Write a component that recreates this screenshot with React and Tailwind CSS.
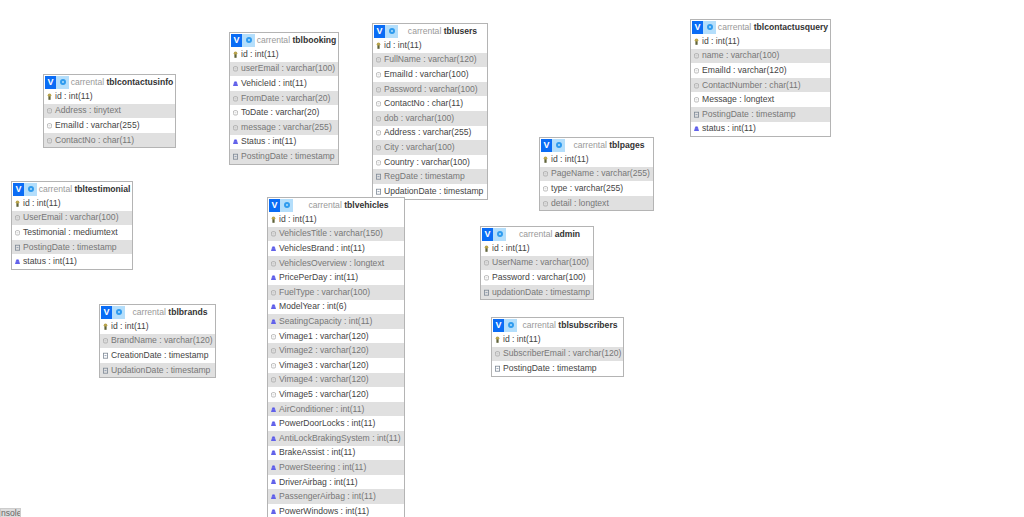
const tables = [
  { db: "carrental", name: "tblcontactusinfo", x: 43, y: 74, w: 133, rows: [["key", "id : int(11)"], ["text", "Address : tinytext"], ["text", "EmailId : varchar(255)"], ["text", "ContactNo : char(11)"]] },
  { db: "carrental", name: "tblbooking", x: 229, y: 32, w: 110, rows: [["key", "id : int(11)"], ["text", "userEmail : varchar(100)"], ["int", "VehicleId : int(11)"], ["text", "FromDate : varchar(20)"], ["text", "ToDate : varchar(20)"], ["text", "message : varchar(255)"], ["int", "Status : int(11)"], ["date", "PostingDate : timestamp"]] },
  { db: "carrental", name: "tblusers", x: 372, y: 23, w: 116, rows: [["key", "id : int(11)"], ["text", "FullName : varchar(120)"], ["text", "EmailId : varchar(100)"], ["text", "Password : varchar(100)"], ["text", "ContactNo : char(11)"], ["text", "dob : varchar(100)"], ["text", "Address : varchar(255)"], ["text", "City : varchar(100)"], ["text", "Country : varchar(100)"], ["date", "RegDate : timestamp"], ["date", "UpdationDate : timestamp"]] },
  { db: "carrental", name: "tblcontactusquery", x: 690, y: 19, w: 141, rows: [["key", "id : int(11)"], ["text", "name : varchar(100)"], ["text", "EmailId : varchar(120)"], ["text", "ContactNumber : char(11)"], ["text", "Message : longtext"], ["date", "PostingDate : timestamp"], ["int", "status : int(11)"]] },
  { db: "carrental", name: "tblpages", x: 539, y: 137, w: 115, rows: [["key", "id : int(11)"], ["text", "PageName : varchar(255)"], ["text", "type : varchar(255)"], ["text", "detail : longtext"]] },
  { db: "carrental", name: "tbltestimonial", x: 11, y: 181, w: 122, rows: [["key", "id : int(11)"], ["text", "UserEmail : varchar(100)"], ["text", "Testimonial : mediumtext"], ["date", "PostingDate : timestamp"], ["int", "status : int(11)"]] },
  { db: "carrental", name: "tblvehicles", x: 267, y: 197, w: 138, rows: [["key", "id : int(11)"], ["text", "VehiclesTitle : varchar(150)"], ["int", "VehiclesBrand : int(11)"], ["text", "VehiclesOverview : longtext"], ["int", "PricePerDay : int(11)"], ["text", "FuelType : varchar(100)"], ["int", "ModelYear : int(6)"], ["int", "SeatingCapacity : int(11)"], ["text", "Vimage1 : varchar(120)"], ["text", "Vimage2 : varchar(120)"], ["text", "Vimage3 : varchar(120)"], ["text", "Vimage4 : varchar(120)"], ["text", "Vimage5 : varchar(120)"], ["int", "AirConditioner : int(11)"], ["int", "PowerDoorLocks : int(11)"], ["int", "AntiLockBrakingSystem : int(11)"], ["int", "BrakeAssist : int(11)"], ["int", "PowerSteering : int(11)"], ["int", "DriverAirbag : int(11)"], ["int", "PassengerAirbag : int(11)"], ["int", "PowerWindows : int(11)"]] },
  { db: "carrental", name: "admin", x: 480, y: 226, w: 114, rows: [["key", "id : int(11)"], ["text", "UserName : varchar(100)"], ["text", "Password : varchar(100)"], ["date", "updationDate : timestamp"]] },
  { db: "carrental", name: "tblbrands", x: 99, y: 304, w: 117, rows: [["key", "id : int(11)"], ["text", "BrandName : varchar(120)"], ["date", "CreationDate : timestamp"], ["date", "UpdationDate : timestamp"]] },
  { db: "carrental", name: "tblsubscribers", x: 491, y: 317, w: 133, rows: [["key", "id : int(11)"], ["text", "SubscriberEmail : varchar(120)"], ["date", "PostingDate : timestamp"]] },
];

const FieldIcon = ({ type }) => {
  if (type === "key") {
    return (
      <svg width="5" height="7" viewBox="0 0 5 7" className="shrink-0">
        <circle cx="2.5" cy="2.2" r="1.8" fill="#b9a44c" />
        <rect x="1.4" y="3.4" width="2.2" height="3.4" fill="#5f6238" />
      </svg>
    );
  }
  if (type === "int") {
    return (
      <svg width="5" height="7" viewBox="0 0 5 7" className="shrink-0">
        <path d="M1.5 1.5h2L5 6H0z" fill="#4646e6" />
        <path d="M0 3.2h5M0 5h5" stroke="#b4b4f4" strokeWidth="0.5" />
      </svg>
    );
  }
  if (type === "date") {
    return (
      <svg width="5" height="7" viewBox="0 0 5 7" className="shrink-0">
        <rect x="0.4" y="1.2" width="4.2" height="5" fill="none" stroke="#7d8894" strokeWidth="0.8" />
        <path d="M1.5 3.6h2" stroke="#7d8fa8" strokeWidth="0.8" />
      </svg>
    );
  }
  return (
    <svg width="5" height="7" viewBox="0 0 5 7" className="shrink-0">
      <rect x="0.4" y="1.6" width="4.2" height="4.4" rx="1.4" fill="none" stroke="#a0a0a0" strokeWidth="0.7" />
      <path d="M1.6 3.8h1.8" stroke="#b4b4b4" strokeWidth="0.6" />
    </svg>
  );
};

const DbTable = ({ table }) => (
  <div
    className="absolute bg-white border border-[#b4b4b4] overflow-hidden"
    style={{ left: table.x, top: table.y, width: table.w }}
  >
    <div className="flex items-center h-[14px] pl-px">
      <div className="w-[11px] h-[13px] shrink-0 bg-[#0a6cf5] text-white text-[9px] font-bold leading-[13px] text-center">
        V
      </div>
      <div className="w-[13px] h-[13px] shrink-0 bg-[#b4defb] flex items-center justify-center">
        <div className="w-[6px] h-[6px] rounded-full border-2 border-[#2f9bee]" />
      </div>
      <div className="flex-1 min-w-0 text-center whitespace-nowrap text-[8.6px] leading-[13px] text-[#999999]">
        {table.db} <span className="font-bold text-[#333333]">{table.name}</span>
      </div>
    </div>
    {table.rows.map(([type, label], i) => (
      <div
        key={label}
        className={`flex items-center gap-[3px] h-[14.6px] pl-[3px] whitespace-nowrap text-[8.6px] ${
          i % 2 === 1 ? "bg-[#e0e0e0] text-[#777777]" : "bg-white text-[#444444]"
        }`}
      >
        <FieldIcon type={type} />
        <span>{label}</span>
      </div>
    ))}
  </div>
);

export default function App() {
  return (
    <div className="relative w-[1024px] h-[517px] overflow-hidden bg-white font-['Liberation_Sans',Arial,sans-serif]">
      {tables.map((t) => (
        <DbTable key={t.name} table={t} />
      ))}
      <div className="absolute left-0 bottom-0 w-[21px] h-[9px] overflow-hidden bg-[#dddddd] border border-b-0 border-[#cccccc] text-[8.6px] leading-[9px] text-[#666666] text-right pr-px">
        nsole
      </div>
    </div>
  );
}
